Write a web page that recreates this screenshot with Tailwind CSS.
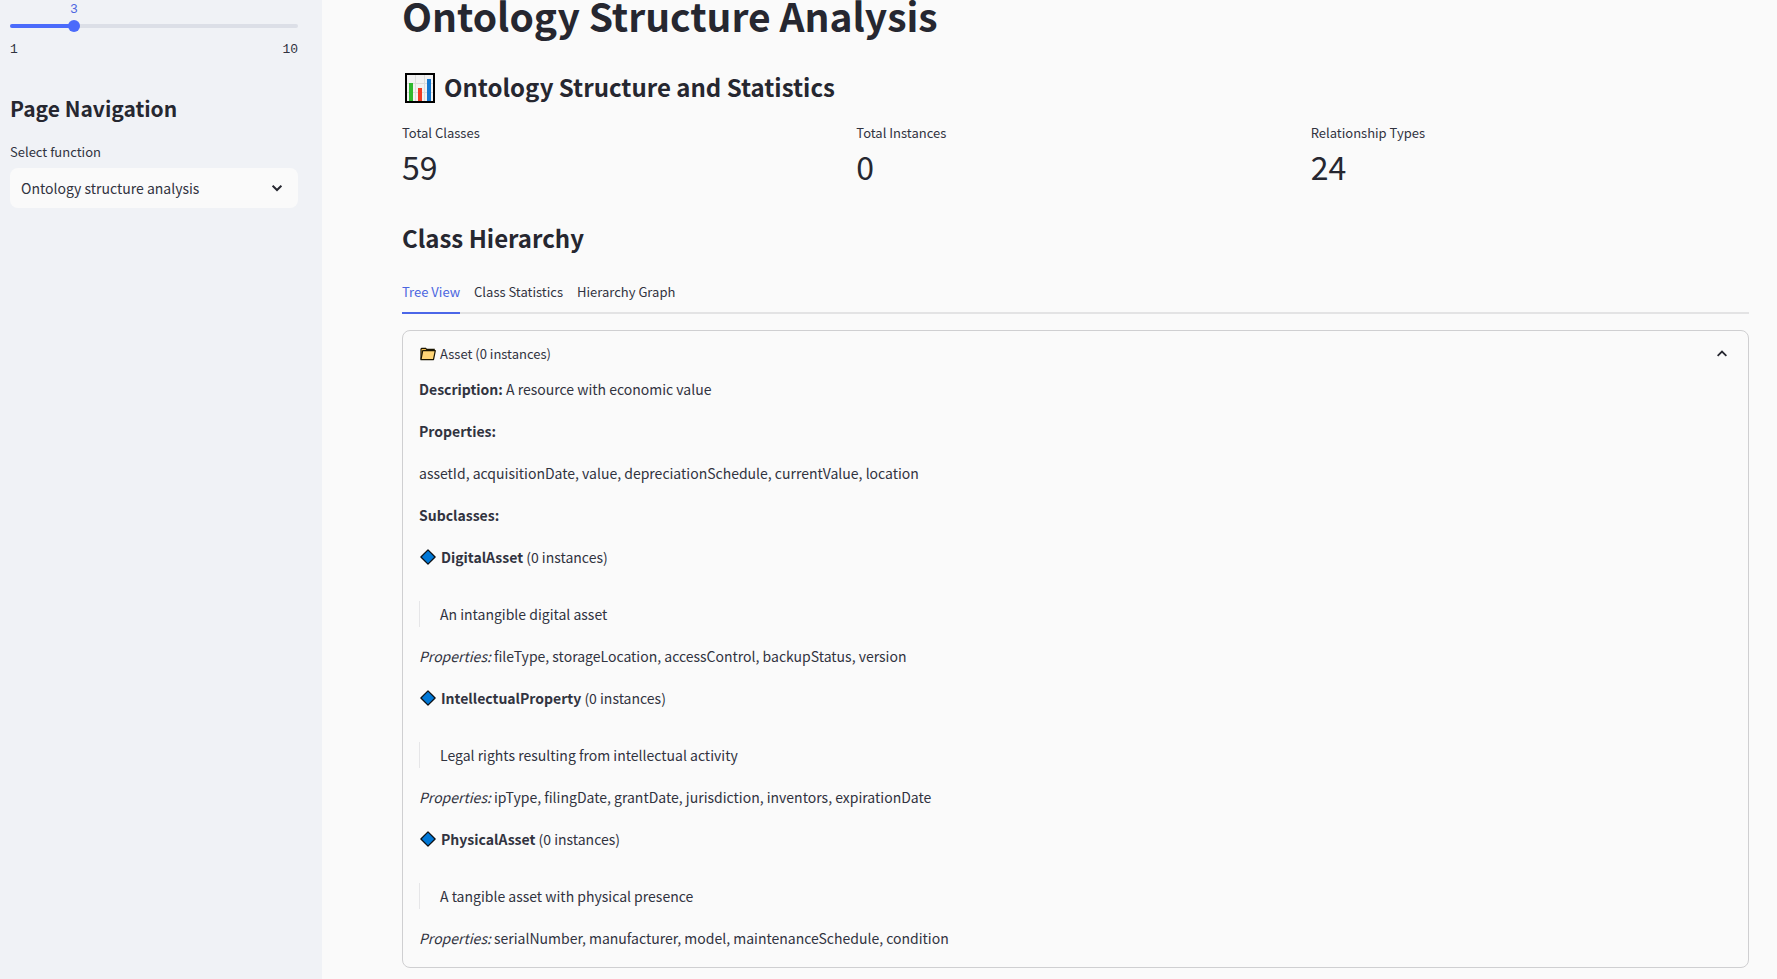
<!DOCTYPE html>
<html lang="en">
<head>
<meta charset="utf-8">
<meta name="viewport" content="width=device-width, initial-scale=1">
<title>Ontology Structure Analysis</title>
<script src="https://cdn.jsdelivr.net/npm/@tailwindcss/browser@4"></script>
</head>
<body class="bg-[#fafafa] font-['Noto_Sans_CJK_SC','Noto_Sans',sans-serif] text-[14px] leading-[26px] text-[#31333f]">
<svg class="hidden" aria-hidden="true">
  <symbol id="diamond" viewBox="0 0 16 16"><path d="M8 .9 15.1 8 8 15.1.9 8Z" fill="#0078d7" stroke="#0b0f14" stroke-width="1.3" stroke-linejoin="round"/></symbol>
</svg>
<div class="flex min-h-screen">
  <aside class="w-[322px] shrink-0 bg-[#f0f2f6] pl-[10px] pr-6">
    <div class="relative h-8">
      <output for="count" class="absolute left-[64px] top-0 -translate-x-1/2 font-['Liberation_Mono',monospace] text-[13px] leading-5 text-[#4d66e0]">3</output>
      <div class="absolute inset-x-0 top-6 h-1 overflow-hidden rounded-full bg-[#dcdfe7]"><div class="h-full bg-[#4b6bfb]" style="width:22.22%"></div></div>
      <input id="count" type="range" min="1" max="10" value="3" aria-label="Depth" class="absolute -left-1.5 top-5 h-3 w-[calc(100%+12px)] appearance-none bg-transparent [&::-webkit-slider-thumb]:size-3 [&::-webkit-slider-thumb]:appearance-none [&::-webkit-slider-thumb]:rounded-full [&::-webkit-slider-thumb]:bg-[#4b6bfb]">
    </div>
    <div class="mt-2 flex justify-between font-['Liberation_Mono',monospace] text-[13px] leading-5"><span>1</span><span>10</span></div>
    <h2 class="mt-[34px] text-[21px] font-bold leading-7 text-[#262730]">Page Navigation</h2>
    <label for="page" class="mt-5 block text-[13px] leading-5">Select function</label>
    <div class="relative mt-[6px]">
      <select id="page" class="h-10 w-full appearance-none rounded-lg bg-[#fafafa] pl-[11px] pr-10 text-[14px]"><option>Ontology structure analysis</option></select>
      <svg class="pointer-events-none absolute right-4 top-[15px] h-[10px] w-[10px]" viewBox="0 0 10 10" fill="none" stroke="#262730" stroke-width="2"><path d="m.6 2.6 4.4 4.4 4.4-4.4"/></svg>
    </div>
  </aside>
  <main class="min-w-0 grow pl-20 pr-7">
    <h1 class="text-[39px] font-bold leading-[30px] text-[#262730]">Ontology Structure Analysis</h1>
    <h2 class="mt-[41px] flex items-center gap-[9px] text-[24px] font-bold leading-8 text-[#262730]">
      <svg class="ml-[3px] mt-px h-[30px] w-[30px]" viewBox="0 0 30 30" aria-hidden="true"><rect x="1" y="1" width="28" height="28" fill="#f2f2f2" stroke="#000" stroke-width="2"/><path d="M10.500 2v26M19.500 2v26M2 10.500h26M2 19.500h26" stroke="#dcdcdc"/><path d="M4 10h4v18H4z" fill="#2eb82e"/><path d="M13 15h4v13h-4z" fill="#f03a22"/><path d="M22 6h4v22h-4z" fill="#1478d0"/></svg>
      Ontology Structure and Statistics</h2>
    <dl class="mt-5 grid grid-cols-3 gap-4">
      <div><dt class="text-[13px] leading-5">Total Classes</dt><dd class="mt-[3px] text-[32px] leading-10 text-[#262730]">59</dd></div>
      <div><dt class="text-[13px] leading-5">Total Instances</dt><dd class="mt-[3px] text-[32px] leading-10 text-[#262730]">0</dd></div>
      <div><dt class="text-[13px] leading-5">Relationship Types</dt><dd class="mt-[3px] text-[32px] leading-10 text-[#262730]">24</dd></div>
    </dl>
    <h2 class="mt-9 text-[24px] font-bold leading-8 text-[#262730]">Class Hierarchy</h2>
    <div role="tablist" class="mt-7 flex gap-[14px] text-[13px] leading-5 shadow-[inset_0_-2px_#e3e3e4]">
      <button role="tab" aria-selected="true" class="border-b-2 border-[#4b66e8] pb-[10px] text-[#4b66e0]">Tree View</button>
      <button role="tab" aria-selected="false" class="border-b-2 border-transparent pb-[10px]">Class Statistics</button>
      <button role="tab" aria-selected="false" class="border-b-2 border-transparent pb-[10px]">Hierarchy Graph</button>
    </div>
    <section class="mt-4 rounded-lg border border-[#cfcfd1] px-4 pb-4 pt-[13px]">
      <button aria-expanded="true" class="flex w-full items-center text-[13px] leading-5">
        <svg class="mr-1 ml-px h-[14px] w-4" viewBox="0 0 16 14" aria-hidden="true"><path d="M1 12.500V2l.7-.6h4L6.600 2.300h7.600v1.500" fill="#f5bf4f" stroke="#1a1400" stroke-width="1.200"/><path d="M1 12.700 2.700 3.700H15.300L13.500 12.700Z" fill="#ffd576" stroke="#1a1400" stroke-width="1.200" stroke-linejoin="round"/></svg>
        Asset (0 instances)
        <svg class="ml-auto mr-[5px] h-[10px] w-[10px]" viewBox="0 0 10 10" fill="none" stroke="#262730" stroke-width="1.800"><path d="m.6 6.900 4.400-4.400 4.400 4.400"/></svg>
      </button>
      <div class="mt-3 flex flex-col gap-4">
        <p><strong class="font-bold">Description:</strong> A resource with economic value</p>
        <p><strong class="font-bold">Properties:</strong></p>
        <p>assetId, acquisitionDate, value, depreciationSchedule, currentValue, location</p>
        <p><strong class="font-bold">Subclasses:</strong></p>
        <p class="flex items-center gap-1"><svg class="mx-px h-4 w-4" aria-hidden="true"><use href="#diamond"/></svg><span><strong class="font-bold">DigitalAsset</strong> (0 instances)</span></p>
        <blockquote class="mt-[15px] border-l border-[#e6e6e8] pl-5">An intangible digital asset</blockquote>
        <p><em>Properties:</em> fileType, storageLocation, accessControl, backupStatus, version</p>
        <p class="flex items-center gap-1"><svg class="mx-px h-4 w-4" aria-hidden="true"><use href="#diamond"/></svg><span><strong class="font-bold">IntellectualProperty</strong> (0 instances)</span></p>
        <blockquote class="mt-[15px] border-l border-[#e6e6e8] pl-5">Legal rights resulting from intellectual activity</blockquote>
        <p><em>Properties:</em> ipType, filingDate, grantDate, jurisdiction, inventors, expirationDate</p>
        <p class="flex items-center gap-1"><svg class="mx-px h-4 w-4" aria-hidden="true"><use href="#diamond"/></svg><span><strong class="font-bold">PhysicalAsset</strong> (0 instances)</span></p>
        <blockquote class="mt-[15px] border-l border-[#e6e6e8] pl-5">A tangible asset with physical presence</blockquote>
        <p><em>Properties:</em> serialNumber, manufacturer, model, maintenanceSchedule, condition</p>
      </div>
    </section>
  </main>
</div>
</body>
</html>
